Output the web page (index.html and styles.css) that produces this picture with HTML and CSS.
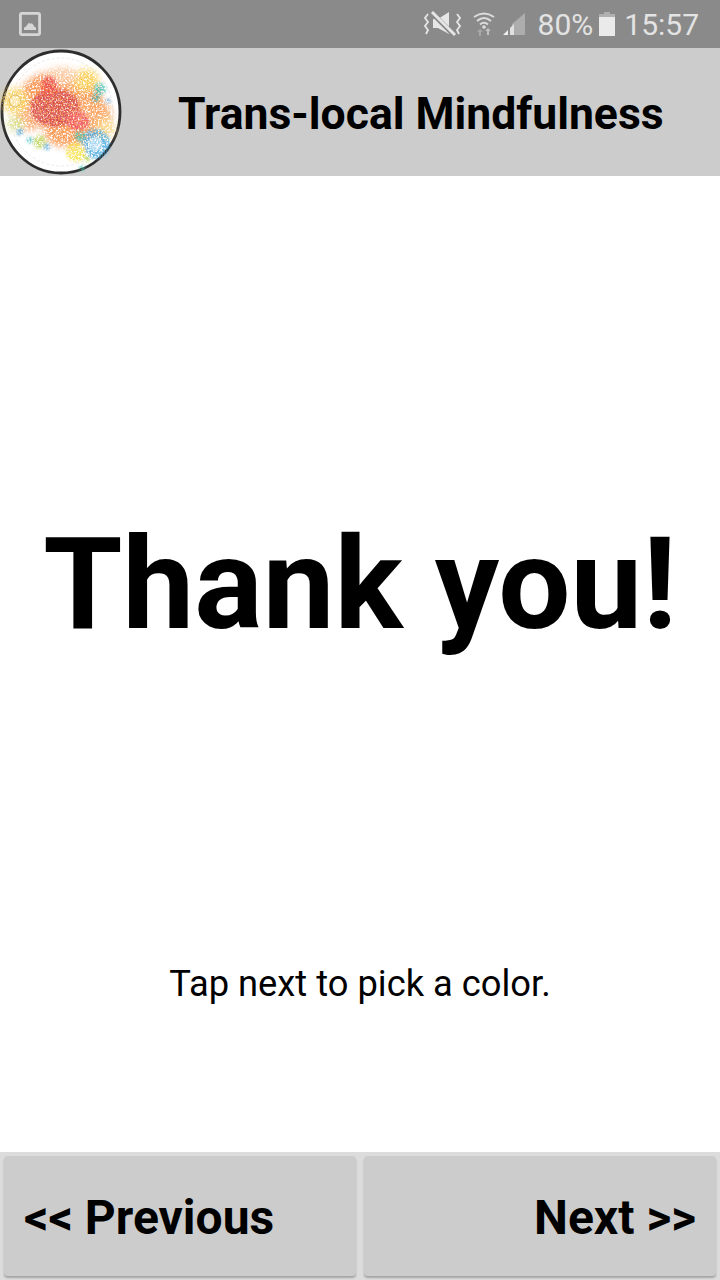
FILE: index.html
```html
<!DOCTYPE html>
<html lang="en">
<head>
<meta charset="utf-8">
<title>Trans-local Mindfulness</title>
<link rel="stylesheet" href="styles.css">
</head>
<body>
<div class="app">
  <div class="statusbar">
    <svg class="img-ico" width="22" height="24" viewBox="0 0 22 24"><rect x="1.400" y="1.400" width="19.200" height="21.200" rx="1.500" fill="none" stroke="#d6d6d6" stroke-width="2.800"/><path d="M5 18 V15.500 Q7 15 8.500 12.500 Q10 10 11.500 12 Q12.500 10.500 14 12.500 Q15 15 17 15.500 V18Z" fill="#d6d6d6"/></svg>
    <div class="status-right">
      <svg class="vib" width="37" height="26" viewBox="0 0 37 26"><g fill="none" stroke="#e6e6e6" stroke-width="1.800"><path d="M4 3 L1 7 L4 11 L1 15 L4 19 L2 23"/><path d="M33 3 L36 7 L33 11 L36 15 L33 19 L35 23"/></g><path d="M9 8 H14 L25 1 V23 L14 17 H9 Z" fill="#e6e6e6"/><path d="M7 1 L31 25" stroke="#8a8a8a" stroke-width="5"/><path d="M8 1 L31 24" stroke="#e6e6e6" stroke-width="3"/></svg>
      <svg class="wifi" width="22" height="24" viewBox="0 0 22 24"><g fill="none" stroke="#dcdcdc" stroke-width="2"><path d="M1 5 Q11 -2 21 5"/><path d="M4 9 Q11 3 18 9"/><path d="M7 12.500 Q11 9 15 12.500"/></g><circle cx="11" cy="15" r="1.800" fill="#dcdcdc"/><path d="M6 24 V20 H4 L7 17 L10 20 H8 V24Z" fill="#a8a8a8"/><path d="M14 23 V19 H12 L15 16 L18 19 H16 V23Z" fill="#c0c0c0"/></svg>
      <svg class="signal" width="24" height="24" viewBox="0 0 24 24"><path d="M23 1 V23 H10 V12Z" fill="#adadad"/><path d="M1 23 L6 18 V23Z" fill="#f0f0f0"/><path d="M8 16 L12 12 V23 H8Z" fill="#e0e0e0"/></svg>
      <span class="pct">80%</span>
      <svg class="batt" width="16" height="24" viewBox="0 0 16 24"><path d="M5 0 H11 V2 H16 V24 H0 V2 H5Z" fill="#eaeaea"/><path d="M5 0 H11 V2 H16 V5 H0 V2 H5Z" fill="#b0b0b0"/></svg>
      <span class="clock">15:57</span>
    </div>
  </div>
  <header class="titlebar">
    <svg class="logo" width="122" height="128" viewBox="0 0 122 128">
      <defs>
        <filter id="speckle" x="-10%" y="-10%" width="120%" height="120%">
          <feGaussianBlur in="SourceGraphic" stdDeviation="3.500" result="blur"/>
          <feTurbulence type="fractalNoise" baseFrequency="0.55" numOctaves="2" seed="4" result="noise"/>
          <feColorMatrix in="noise" type="matrix" values="0 0 0 0 0  0 0 0 0 0  0 0 0 0 0  0 0 0 4 -1.200" result="mask"/>
          <feComposite in="blur" in2="mask" operator="in"/>
        </filter>
        <filter id="speckle2" x="-20%" y="-20%" width="140%" height="140%">
          <feGaussianBlur in="SourceGraphic" stdDeviation="1.500" result="blur"/>
          <feTurbulence type="fractalNoise" baseFrequency="0.6" numOctaves="2" seed="9" result="noise"/>
          <feColorMatrix in="noise" type="matrix" values="0 0 0 0 0  0 0 0 0 0  0 0 0 0 0  0 0 0 4 -1.300" result="mask"/>
          <feComposite in="blur" in2="mask" operator="in"/>
        </filter>
      </defs>
      <ellipse cx="61" cy="64" rx="59" ry="61" fill="#fff" stroke="#2d2d2d" stroke-width="2.800"/>
      <ellipse cx="61" cy="64" rx="52" ry="54" fill="none" stroke="#e6e6e6" stroke-width="0.800" stroke-dasharray="3 2"/>
      <g filter="url(#speckle)">
        <ellipse cx="60" cy="52" rx="42" ry="30" fill="#f99a58"/>
        <ellipse cx="88" cy="68" rx="24" ry="20" fill="#fba868"/>
        <ellipse cx="66" cy="85" rx="22" ry="14" fill="#fb9f5c"/>
        <ellipse cx="30" cy="70" rx="14" ry="13" fill="#fcae78"/>
        <ellipse cx="85" cy="32" rx="14" ry="11" fill="#fbd25e"/>
        <ellipse cx="62" cy="28" rx="16" ry="9" fill="#fcc9a0"/>
        <circle cx="15" cy="53" r="13" fill="#fbd56a"/>
        <ellipse cx="16" cy="76" rx="9" ry="7" fill="#d9dd88"/>
        <ellipse cx="106" cy="80" rx="9" ry="10" fill="#fbd88c"/>
      </g>
      <g class="logo-dots" filter="url(#speckle2)">
        <ellipse cx="55" cy="60" rx="25" ry="19" fill="#cf3a4c"/>
        <ellipse cx="49" cy="38" rx="8" ry="10" fill="#e8343f"/>
        <ellipse cx="78" cy="73" rx="11" ry="10" fill="#ee4a66"/>
        <circle cx="95" cy="96" r="15" fill="#38a3de"/>
        <circle cx="76" cy="104" r="10" fill="#f5dc2c"/>
        <circle cx="100" cy="41" r="6" fill="#2cbcb4"/>
        <circle cx="96" cy="50" r="4" fill="#2ca8ac"/>
        <circle cx="40" cy="94" r="7" fill="#b6d04a"/>
        <circle cx="30" cy="92" r="3.200" fill="#36b8b8"/>
        <circle cx="47" cy="99" r="3.200" fill="#389fdc"/>
        <circle cx="20" cy="84" r="3.400" fill="#3a94d8"/>
        <circle cx="80" cy="88" r="5.500" fill="#34bcae"/>
        <circle cx="82" cy="120" r="3" fill="#4cc6aa"/>
        <circle cx="87" cy="111" r="3.500" fill="#b8d24e"/>
        <circle cx="108" cy="53" r="2.500" fill="#3a94d8"/>
      </g>
      <circle cx="95" cy="96" r="7" fill="#fff" fill-opacity=".45"/>
      <circle cx="15" cy="53" r="6" fill="none" stroke="#e0bc60" stroke-width="1"/>
      <circle cx="15" cy="53" r="5" fill="#fff" fill-opacity=".4"/>
    </svg>
    <h1 class="apptitle">Trans-local Mindfulness</h1>
  </header>
  <main class="content">
    <h2 class="thanks">Thank you!</h2>
    <p class="hint">Tap next to pick a color.</p>
  </main>
  <nav class="navbar">
    <button class="navbtn prev">&lt;&lt; Previous</button>
    <button class="navbtn next">Next &gt;&gt;</button>
  </nav>
</div>
</body>
</html>
```
FILE: styles.css
```css
* { box-sizing: border-box; }
html, body { margin: 0; padding: 0; }
body { background: #fff; font-family: Roboto, "Liberation Sans", sans-serif; color: #000; }
.app { width: 720px; height: 1280px; display: flex; flex-direction: column; overflow: hidden; }
.statusbar { height: 48px; background: #8a8a8a; display: flex; align-items: center; justify-content: space-between; padding: 0 21px 0 19px; flex: none; }
.status-right { display: flex; align-items: center; color: #e3e3e3; font-size: 30px; }
.vib { margin-right: 12px; }
.wifi { margin-right: 7px; }
.signal { margin-right: 12px; }
.pct { margin-right: 6px; }
.batt { margin-right: 9px; }
.titlebar { height: 128px; background: #ccc; display: flex; align-items: center; flex: none; }
.logo { flex: none; }
.logo-dots { opacity: .75; }
.apptitle { flex: 1; margin: 0; padding: 5px 0 0 56px; font-size: 44.500px; font-weight: 700; line-height: 1; white-space: nowrap; }
.content { flex: 1; display: flex; flex-direction: column; align-items: center; min-height: 0; }
.thanks { margin: 333px 0 0; font-size: 128px; font-weight: 700; line-height: 150px; white-space: nowrap; }
.hint { margin: 304px 0 0; font-size: 36.300px; line-height: 42px; }
.navbar { height: 128px; flex: none; background: #dcdcdc; display: flex; gap: 8px; padding: 4px; }
.navbtn { flex: 1; border: 0; border-radius: 4px; background: #ccc; box-shadow: 0 2px 2px rgba(0,0,0,.25); font-family: inherit; font-size: 48px; font-weight: 700; color: #000; padding: 2px 20px 0; }
.prev { text-align: left; }
.next { text-align: right; }
```
